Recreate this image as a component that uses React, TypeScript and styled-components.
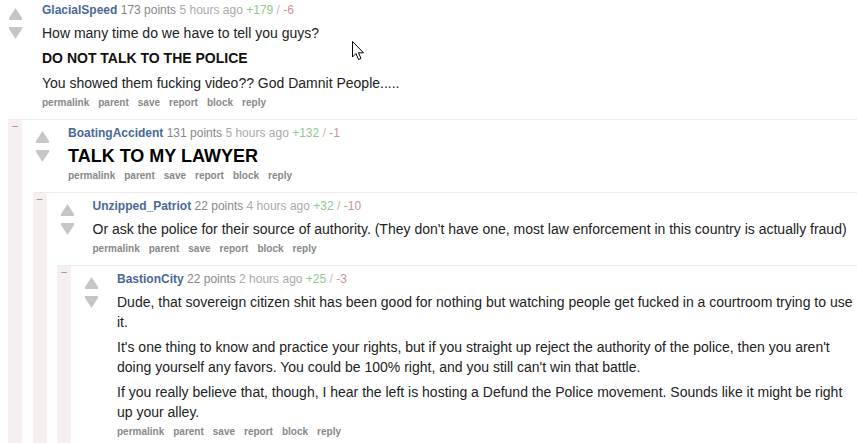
import React from "react";
import styled, { createGlobalStyle } from "styled-components";

const Global = createGlobalStyle`
  html, body { margin: 0; padding: 0; background: #fff; }
  body { font-family: "Liberation Sans", Arial, sans-serif; overflow: hidden; }
  #root { width: 857px; }
`;

const Page = styled.div`
  position: relative;
  width: 857px;
`;

const CommentBox = styled.div<{ $top?: boolean }>`
  display: flex;
  border-top: ${(p) => (p.$top ? "none" : "1px solid #ececec")};
`;

const Strip = styled.div`
  flex: none;
  width: 14px;
  background: #f7efef;
  color: #8a8a8a;
  font-size: 10px;
  line-height: 12px;
  text-align: center;
`;

const Main = styled.div`
  flex: 1;
  min-width: 0;
`;

const Entry = styled.div<{ $top?: boolean }>`
  display: flex;
  padding-top: ${(p) => (p.$top ? 3 : 6)}px;
  padding-bottom: 9px;
`;

const Midcol = styled.div<{ $top?: boolean }>`
  flex: none;
  width: 13px;
  margin-left: ${(p) => (p.$top ? 9 : 14)}px;
  margin-right: ${(p) => (p.$top ? 20 : 19)}px;
  padding-top: 5px;
  display: flex;
  flex-direction: column;
  gap: 7px;
`;

const Content = styled.div`
  flex: 1;
  min-width: 0;
`;

const Tagline = styled.div`
  font-size: 12px;
  line-height: 15px;
  color: #888;
  white-space: nowrap;
`;

const Author = styled.span`
  font-weight: bold;
  color: #4a6897;
`;

const Points = styled.span`
  color: #888;
`;

const Age = styled.span`
  color: #aaa;
`;

const Up = styled.span`
  color: #8ec88e;
`;

const Slash = styled.span`
  color: #c8b4b4;
`;

const Down = styled.span`
  color: #c99494;
`;

const Md = styled.div`
  margin-top: 5px;
  font-size: 14px;
  line-height: 20px;
  color: #222;
  & > :last-child {
    margin-bottom: 3px;
  }
`;

const P = styled.p`
  margin: 0 0 5px;
`;

const Strong = styled.p`
  margin: 0 0 5px;
  font-weight: bold;
  color: #111;
`;

const H1 = styled.h1`
  margin: 0;
  font-size: 18px;
  line-height: 20px;
  font-weight: bold;
  color: #000;
`;

const Buttons = styled.ul`
  display: flex;
  gap: 9px;
  list-style: none;
  margin: 0;
  padding: 0;
  font-size: 10px;
  line-height: 14px;
  font-weight: bold;
  color: #888;
`;

const Children = styled.div<{ $top?: boolean }>`
  margin-left: ${(p) => (p.$top ? 8 : 10.5)}px;
`;

const Cursor = styled.svg`
  position: absolute;
  left: 352px;
  top: 41px;
`;

const Arrow = ({ down }: { down?: boolean }) => (
  <svg width="13" height="12" viewBox="0 0 13 12" style={{ display: "block" }}>
    <polygon
      fill="#c6c6c6"
      points={down ? "0,0 13,0 13,2 6.5,12 0,2" : "6.5,0 13,10 13,12 0,12 0,10"}
    />
  </svg>
);

type CommentProps = {
  top?: boolean;
  author: string;
  points: number;
  age: string;
  up: number;
  down: number;
  body: React.ReactNode;
  children?: React.ReactNode;
};

const BUTTONS = ["permalink", "parent", "save", "report", "block", "reply"];

function Comment({ top, author, points, age, up, down, body, children }: CommentProps) {
  return (
    <CommentBox $top={top}>
      {!top && <Strip>–</Strip>}
      <Main>
        <Entry $top={top}>
          <Midcol $top={top}>
            <Arrow />
            <Arrow down />
          </Midcol>
          <Content>
            <Tagline>
              <Author>{author}</Author> <Points>{points} points</Points>{" "}
              <Age>{age}</Age> <Up>+{up}</Up> <Slash>/</Slash> <Down>-{down}</Down>
            </Tagline>
            <Md>{body}</Md>
            <Buttons>
              {BUTTONS.map((b) => (
                <li key={b}>{b}</li>
              ))}
            </Buttons>
          </Content>
        </Entry>
        {children && <Children $top={top}>{children}</Children>}
      </Main>
    </CommentBox>
  );
}

export default function App() {
  return (
    <Page>
      <Global />
      <Comment
        top
        author="GlacialSpeed"
        points={173}
        age="5 hours ago"
        up={179}
        down={6}
        body={
          <>
            <P>How many time do we have to tell you guys?</P>
            <Strong>DO NOT TALK TO THE POLICE</Strong>
            <P>You showed them fucking video?? God Damnit People.....</P>
          </>
        }
      >
        <Comment
          author="BoatingAccident"
          points={131}
          age="5 hours ago"
          up={132}
          down={1}
          body={<H1>TALK TO MY LAWYER</H1>}
        >
          <Comment
            author="Unzipped_Patriot"
            points={22}
            age="4 hours ago"
            up={32}
            down={10}
            body={
              <P>
                Or ask the police for their source of authority. (They don't have one, most law
                enforcement in this country is actually fraud)
              </P>
            }
          >
            <Comment
              author="BastionCity"
              points={22}
              age="2 hours ago"
              up={25}
              down={3}
              body={
                <>
                  <P>
                    Dude, that sovereign citizen shit has been good for nothing but watching people
                    get fucked in a courtroom trying to use it.
                  </P>
                  <P>
                    It's one thing to know and practice your rights, but if you straight up reject
                    the authority of the police, then you aren't doing yourself any favors. You could
                    be 100% right, and you still can't win that battle.
                  </P>
                  <P>
                    If you really believe that, though, I hear the left is hosting a Defund the
                    Police movement. Sounds like it might be right up your alley.
                  </P>
                </>
              }
            />
          </Comment>
        </Comment>
      </Comment>
      <Cursor width="13" height="20" viewBox="0 0 13 20">
        <path
          d="M0.5,0.5 L0.5,16 L4,12.5 L6.5,18.5 L9,17.5 L6.5,11.8 L11.5,11.8 Z"
          fill="#fff"
          stroke="#000"
          strokeWidth="1"
        />
      </Cursor>
    </Page>
  );
}
